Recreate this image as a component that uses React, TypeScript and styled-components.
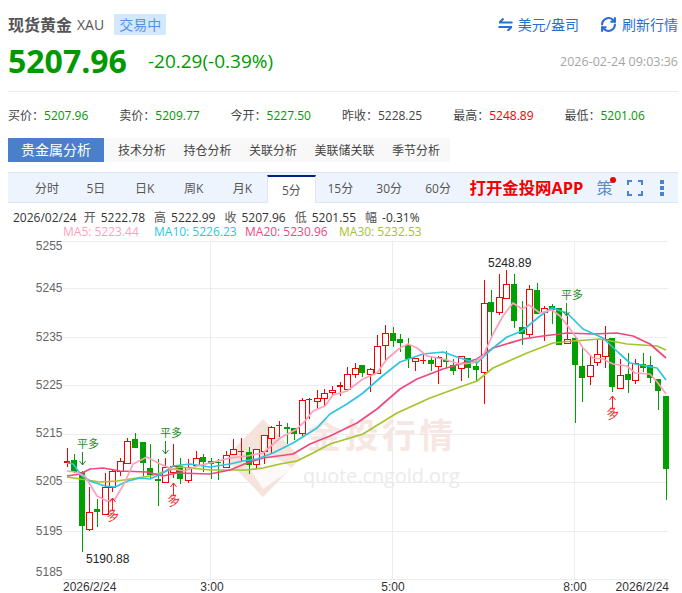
import React from "react";
import styled, { createGlobalStyle } from "styled-components";

const Global = createGlobalStyle`
  html, body { margin: 0; padding: 0; background: #fff; }
  body { font-family: "Open Sans", "Noto Sans CJK SC", sans-serif; font-size: 12px; color: #333; }
`;

const Page = styled.div`
  width: 682px;
  height: 593px;
  overflow: hidden;
  background: #fff;
`;
const Top = styled.div`
  padding: 0 4px 0 8px;
`;
const TitleRow = styled.div`
  display: flex;
  align-items: center;
  height: 24px;
  padding-top: 12px;
`;
const Title = styled.span`
  font-size: 16px;
  font-weight: 700;
  color: #555;
`;
const Code = styled.span`
  font-size: 14px;
  color: #555;
  margin-left: 5px;
`;
const Badge = styled.span`
  margin-left: 10px;
  width: 52px;
  height: 21px;
  line-height: 21px;
  text-align: center;
  font-size: 14px;
  color: #4f94e8;
  background: #d4e8fd;
`;
const Links = styled.div`
  margin-left: auto;
  display: flex;
  gap: 21px;
`;
const LinkItem = styled.a`
  display: flex;
  align-items: center;
  gap: 5px;
  font-size: 14px;
  color: #2a6fd0;
  white-space: nowrap;
`;
const PriceRow = styled.div`
  display: flex;
  align-items: center;
  height: 50px;
  padding-bottom: 5px;
  border-bottom: 1px solid #ececec;
`;
const Price = styled.span`
  font-size: 32px;
  font-weight: 700;
  color: #009a00;
  line-height: 50px;
`;
const Change = styled.span`
  font-size: 19px;
  color: #009a00;
  margin-left: 21px;
  margin-bottom: 1px;
`;
const Stamp = styled.span`
  margin-left: auto;
  font-size: 12.5px;
  color: #a5a5a5;
`;
const Stats = styled.div`
  display: grid;
  grid-template-columns: repeat(6, 111.3px);
  padding: 16px 0 14px;
  line-height: 16px;
`;
const Stat = styled.div`
  font-size: 12px;
  color: #444;
  white-space: nowrap;
`;
const StatValue = styled.span<{ $c: string }>`
  color: ${(p) => p.$c};
`;
const Tabs = styled.div`
  display: flex;
  align-items: center;
  width: 442px;
  height: 24px;
  background: #f8f8f8;
`;
const ActiveTab = styled.div`
  flex: none;
  width: 96px;
  height: 24px;
  line-height: 24px;
  text-align: center;
  font-size: 14px;
  color: #fff;
  background: #4a7fcb;
  margin-right: 14px;
`;
const Tab = styled.div`
  flex: none;
  font-size: 12px;
  color: #444;
  margin-right: 17.5px;
  white-space: nowrap;
`;
const Periods = styled.div`
  display: flex;
  align-items: center;
  height: 29px;
  margin-top: 10px;
  padding-left: 14.5px;
  background: #eef4fd;
  border-top: 1px solid #dfe6f3;
  border-bottom: 1px solid #dfe6f3;
  position: relative;
`;
const Period = styled.div<{ $active?: boolean }>`
  width: 48.9px;
  text-align: center;
  font-size: 12px;
  color: #555;
  box-sizing: border-box;
  ${(p) =>
    p.$active
      ? `
    height: 28px;
    align-self: flex-end;
    margin-bottom: -1px;
    line-height: 27px;
    padding-top: 0;
    background: #fff;
    border-top: 2px solid #00228a;
    border-left: 1px solid #dfe6f3;
    border-right: 1px solid #dfe6f3;
  `
      : ""}
`;
const AppLink = styled.div`
  margin-left: 7px;
  font-size: 16.4px;
  font-weight: 700;
  color: #f00000;
  white-space: nowrap;
  margin-top: -2px;
`;
const Tools = styled.div`
  margin-left: 13px;
  display: flex;
  align-items: center;
`;
const Ce = styled.span`
  position: relative;
  font-size: 16px;
  color: #5b8ecb;
  width: 16px;
  line-height: 20px;
  margin-right: 15px;
`;
const Dot = styled.i`
  position: absolute;
  right: -4px;
  top: -1px;
  width: 6px;
  height: 6px;
  border-radius: 50%;
  background: #f00000;
`;
const Info = styled.div`
  display: flex;
  padding: 7px 0 0 5px;
  height: 15px;
  line-height: 16px;
  font-size: 12px;
  color: #333;
  white-space: nowrap;
`;
const InfoItem = styled.span`
  margin-right: 9px;
`;
const InfoDate = styled.span`
  margin-right: 7px;
`;
const InfoKey = styled.span`
  color: #555;
  margin-right: 5px;
`;
const MaRow = styled.div`
  display: flex;
  height: 14px;
  line-height: 14px;
  padding-left: 63px;
  font-size: 12px;
  white-space: nowrap;
`;
const Ma = styled.span<{ $c: string; $w: number }>`
  color: ${(p) => p.$c};
  width: ${(p) => p.$w}px;
`;
const Chart = styled.svg`
  display: block;
  width: 682px;
  height: 355px;
`;

const GREEN = "#00a000";
const RED = "#f60000";
const C_MA5 = "#ff9fbd";
const C_MA10 = "#2ec4e2";
const C_MA20 = "#f0487e";
const C_MA30 = "#a3c42a";

type Raw = [number, number, number, number, string];
// bodyTop, bodyBottom, wickTop, wickBottom, kind (g green / r hollow red / f flat red)
const z5: Raw[] = [
  [180, 186, 141, 197, "f"], [178, 212, 160, 215, "g"], [212, 374, 210, 452, "g"], [334, 383, 258, 390, "r"],
  [324, 332, 294, 378, "g"], [259, 338, 215, 338, "r"], [210, 258, 207, 273, "r"], [181, 211, 170, 226, "r"],
  [121, 187, 112, 187, "r"], [115, 140, 97, 140, "g"], [124, 185, 124, 225, "g"], [202, 223, 129, 230, "g"],
  [235, 240, 175, 314, "g"], [199, 242, 170, 242, "r"], [196, 214, 129, 230, "r"], [195, 233, 172, 248, "g"],
  [197, 238, 175, 247, "r"], [172, 192, 150, 198, "r"], [168, 183, 158, 212, "g"], [181, 188, 170, 233, "g"],
  [183, 186, 173, 237, "g"], [163, 198, 150, 200, "r"],
];
const z6: Raw[] = [
  [385, 398, 355, 402, "r"], [389, 393, 352, 420, "f"], [393, 433, 377, 458, "g"], [385, 430, 385, 445, "r"],
  [343, 390, 343, 430, "r"], [319, 350, 316, 400, "r"], [312, 316, 300, 348, "f"], [318, 323, 305, 368, "g"],
  [322, 338, 322, 357, "g"], [238, 335, 230, 345, "r"], [233, 237, 230, 295, "f"], [232, 240, 208, 265, "r"],
  [217, 230, 205, 255, "r"], [206, 212, 195, 225, "r"], [193, 197, 182, 225, "f"], [160, 205, 138, 210, "r"],
  [140, 158, 127, 170, "r"], [132, 156, 132, 168, "g"], [145, 158, 140, 212, "r"], [76, 155, 42, 155, "r"],
  [37, 73, 13, 120, "r"], [37, 60, 18, 78, "g"], [55, 66, 40, 92, "g"], [72, 113, 52, 140, "g"],
  [110, 119, 110, 150, "r"], [117, 121, 97, 130, "f"], [118, 128, 105, 150, "g"], [108, 136, 105, 188, "r"],
  [116, 122, 90, 140, "g"], [132, 149, 115, 162, "g"],
];
const z7: Raw[] = [
  [315, 352, 315, 390, "r"], [322, 350, 322, 380, "g"], [345, 356, 330, 390, "g"], [157, 364, 87, 458, "r"],
  [153, 182, 118, 260, "g"], [139, 182, 68, 192, "r"], [100, 140, 58, 142, "r"], [99, 210, 70, 230, "g"],
  [228, 248, 150, 282, "g"], [115, 250, 102, 258, "r"], [117, 188, 97, 188, "g"], [172, 182, 165, 270, "r"],
  [165, 178, 160, 220, "g"], [171, 281, 171, 281, "g"], [265, 277, 195, 277, "r"], [262, 341, 262, 515, "g"],
  [345, 380, 290, 452, "g"], [343, 376, 315, 403, "r"], [310, 333, 265, 345, "r"], [263, 316, 226, 350, "r"],
  [262, 407, 262, 423, "g"], [373, 410, 325, 410, "r"], [369, 386, 305, 425, "g"], [337, 388, 325, 400, "r"],
  [340, 350, 306, 362, "g"], [343, 380, 315, 395, "g"], [384, 419, 384, 476, "g"], [435, 653, 435, 746, "g"],
];
const toY = (base: number) => (r: Raw): Raw => [base + r[0] / 3, base + r[1] / 3, base + r[2] / 3, base + r[3] / 3, r[4]];
const candles: Raw[] = [...z5.map(toY(400)), ...z6.map(toY(320)), ...z7.map(toY(250))];

const ma5 = "67,470 75,471 85,475 97,495 107,500 115,498 124,483 133,463 147,456 160,463 172,468 185,470 197,465 210,462 230,457 247,455 263,452 280,437 297,428 305,420 313,410 325,405 333,394 347,390 363,378 377,372 387,358 400,347 408,343 417,347 427,355 443,358 460,363 473,362 483,355 493,333 503,315 513,302 522,308 529,304 540,312 552,309 560,315 573,332 583,347 593,357 603,358 613,363 627,365 635,372 650,373 658,382 666,393";
const ma10 = "67,462 73,463 82,475 90,480 105,485 115,486 128,480 140,477 150,478 163,472 173,465 190,463 210,466 230,463 243,460 257,458 273,452 293,442 317,427 330,413 347,403 363,392 380,377 400,361 423,353 443,351 460,357 477,362 493,347 507,336 522,330 540,315 552,307 567,312 583,328 603,337 620,353 630,362 657,367 666,379";
const ma20 = "67,475 80,473 90,468 103,467 120,470 147,471 163,475 177,472 210,473 230,469 247,462 263,457 293,453 310,443 330,435 357,422 377,408 400,388 417,378 443,368 460,363 477,358 493,347 523,338 543,335 567,332 593,333 617,332 633,335 650,343 666,357";
const ma30 = "67,476 100,481 117,480 150,475 180,466 210,469 230,469 247,469 263,467 280,463 297,460 313,452 330,443 363,433 397,412 430,397 460,386 477,380 493,367 527,352 553,342 573,340 600,338 627,343 657,345 666,349";

const hLines = [240, 287, 336, 384, 433, 481, 530, 578];
const vLines = [210, 392.5, 574.3];
const yLabels: [string, number][] = [["5255", 249], ["5245", 291], ["5235", 340], ["5225", 388], ["5215", 436], ["5205", 484], ["5195", 534], ["5185", 575]];

const PingDuo = ({ x, y, tx }: { x: number; y: number; tx: number }) => (
  <g>
    <text x={tx} y={y} fontSize="11" fill="#1f8a1f" textAnchor="middle" fontFamily="'Noto Sans CJK SC', sans-serif">平多</text>
    <path d={`M${x} ${y + 4}V${y + 17}M${x - 3} ${y + 13}L${x} ${y + 17}L${x + 3} ${y + 13}`} stroke="#1f8a1f" strokeWidth="1" fill="none" />
  </g>
);
const Duo = ({ x, y }: { x: number; y: number }) => (
  <g>
    <path d={`M${x} ${y + 13}V${y}M${x - 3} ${y + 4}L${x} ${y}L${x + 3} ${y + 4}`} stroke="#f62020" strokeWidth="1" fill="none" />
    <text x={x} y={y + 22} fontSize="13" fill="#f62020" textAnchor="middle" transform={`rotate(-14 ${x} ${y + 17})`} fontFamily="'Noto Sans CJK SC', sans-serif">多</text>
  </g>
);

const ChartDrawing = () => (
  <Chart viewBox="0 238 682 355">
    {hLines.map((y) => (
      <line key={y} x1="63" x2="668" y1={y + 0.5} y2={y + 0.5} stroke="#ededed" strokeWidth="1" />
    ))}
    {vLines.map((x) => (
      <line key={x} x1={Math.floor(x) + 0.5} x2={Math.floor(x) + 0.5} y1="240" y2="578" stroke="#ededed" strokeWidth="1" />
    ))}
    <g opacity="0.9">
      <path d="M263 418L301 457L263 496L225 457Z" fill="#f6e0d9" />
      <path d="M246 462C262 452 282 456 292 468L263 488Z" fill="#fff" opacity="0.8" />
      <text x="307" y="447" fontSize="34" fontWeight="700" fill="#f6e5df" letterSpacing="3.4" fontFamily="'Noto Sans CJK SC', sans-serif">金投行情</text>
      <text x="303" y="482" fontSize="19.8" fill="#e9e9e9" fontFamily="'Open Sans', sans-serif">quote.cngold.org</text>
    </g>
    {candles.map((c, i) => {
      const x = Math.round(66.7 + 7.58 * i) + 0.5;
      const col = c[4] === "g" ? GREEN : RED;
      const top = Math.round(c[0]);
      const bottom = Math.max(Math.round(c[1]), top + 1);
      return (
        <g key={i}>
          <line x1={x} x2={x} y1={Math.round(c[2])} y2={Math.round(c[3])} stroke={col} strokeWidth="1" />
          {c[4] === "r" ? (
            <rect x={x - 3} y={top + 0.5} width="6" height={bottom - top} fill="#fff" stroke={col} strokeWidth="1" />
          ) : (
            <rect x={x - 3.5} y={top} width="6" height={bottom - top} fill={col} />
          )}
        </g>
      );
    })}
    <polyline points={ma30} fill="none" stroke={C_MA30} strokeWidth="1.7" strokeLinejoin="round" />
    <polyline points={ma20} fill="none" stroke={C_MA20} strokeWidth="1.7" strokeLinejoin="round" />
    <polyline points={ma10} fill="none" stroke={C_MA10} strokeWidth="1.7" strokeLinejoin="round" />
    <polyline points={ma5} fill="none" stroke={C_MA5} strokeWidth="1.7" strokeLinejoin="round" />
    <PingDuo x={82.5} y={447} tx={88} />
    <PingDuo x={165.5} y={436} tx={171} />
    <PingDuo x={566.5} y={298} tx={572} />
    <Duo x={112.5} y={497} />
    <Duo x={173.5} y={482} />
    <Duo x={612.5} y={395} />
    <g fontSize="12" fontFamily="'Liberation Sans', sans-serif">
      <text x="488" y="266" fill="#222">5248.89</text>
      <text x="86" y="562" fill="#222">5190.88</text>
      {yLabels.map(([t, y]) => (
        <text key={t} x="62.5" y={y} fill="#666" textAnchor="end">{t}</text>
      ))}
      <text x="63" y="590" fill="#333">2026/2/24</text>
      <text x="212" y="590" fill="#333" textAnchor="middle">3:00</text>
      <text x="393" y="590" fill="#333" textAnchor="middle">5:00</text>
      <text x="575" y="590" fill="#333" textAnchor="middle">8:00</text>
      <text x="669" y="590" fill="#333" textAnchor="end">2026/2/24</text>
    </g>
  </Chart>
);

const SwapIcon = () => (
  <svg width="15" height="14" viewBox="0 0 15 14" fill="none" stroke="#2a6fd0" strokeWidth="2">
    <path d="M1 5.5H14.5M1.5 5.5L5.5 1.5" />
    <path d="M0.5 10H14M13.5 10L9.5 14" />
  </svg>
);
const RefreshIcon = () => (
  <svg width="17" height="17" viewBox="0 0 24 24" fill="none" stroke="#2a6fd0" strokeWidth="3" strokeLinecap="round" strokeLinejoin="round">
    <path d="M3 12a9 9 0 0 1 15-6.7L21 8" />
    <path d="M21 3v5h-5" />
    <path d="M21 12a9 9 0 0 1-15 6.7L3 16" />
    <path d="M8 16H3v5" />
  </svg>
);
const FullIcon = () => (
  <svg width="16" height="16" viewBox="0 0 16 16" fill="none" stroke="#4a84d0" strokeWidth="2">
    <path d="M1 5V1H5M11 1H15V5M15 11V15H11M5 15H1V11" />
  </svg>
);
const MoreDots = styled.svg`
  margin-left: 17px;
`;
const MoreIcon = () => (
  <MoreDots width="4" height="16" viewBox="0 0 4 16" fill="#4a84d0">
    <rect x="0" y="0" width="4" height="4" />
    <rect x="0" y="6" width="4" height="4" />
    <rect x="0" y="12" width="4" height="4" />
  </MoreDots>
);

const stats: [string, string, string][] = [
  ["买价：", "5207.96", "#009a00"],
  ["卖价：", "5209.77", "#009a00"],
  ["今开：", "5227.50", "#009a00"],
  ["昨收：", "5228.25", "#444"],
  ["最高：", "5248.89", "#f00000"],
  ["最低：", "5201.06", "#009a00"],
];
const info: [string, string][] = [
  ["开", "5222.78"],
  ["高", "5222.99"],
  ["收", "5207.96"],
  ["低", "5201.55"],
  ["幅", "-0.31%"],
];

export default function App() {
  return (
    <Page>
      <Global />
      <Top>
        <TitleRow>
          <Title>现货黄金</Title>
          <Code>XAU</Code>
          <Badge>交易中</Badge>
          <Links>
            <LinkItem><SwapIcon />美元/盎司</LinkItem>
            <LinkItem><RefreshIcon />刷新行情</LinkItem>
          </Links>
        </TitleRow>
        <PriceRow>
          <Price>5207.96</Price>
          <Change>-20.29(-0.39%)</Change>
          <Stamp>2026-02-24 09:03:36</Stamp>
        </PriceRow>
        <Stats>
          {stats.map(([k, v, c]) => (
            <Stat key={k}>{k}<StatValue $c={c}>{v}</StatValue></Stat>
          ))}
        </Stats>
        <Tabs>
          <ActiveTab>贵金属分析</ActiveTab>
          {["技术分析", "持仓分析", "关联分析", "美联储关联", "季节分析"].map((t) => (
            <Tab key={t}>{t}</Tab>
          ))}
        </Tabs>
        <Periods>
          {["分时", "5日", "日K", "周K", "月K"].map((t) => <Period key={t}>{t}</Period>)}
          <Period $active>5分</Period>
          {["15分", "30分", "60分"].map((t) => <Period key={t}>{t}</Period>)}
          <AppLink>打开金投网APP</AppLink>
          <Tools>
            <Ce>策<Dot /></Ce>
            <FullIcon />
            <MoreIcon />
          </Tools>
        </Periods>
        <Info>
          <InfoDate>2026/02/24</InfoDate>
          {info.map(([k, v]) => (
            <InfoItem key={k}><InfoKey>{k}</InfoKey>{v}</InfoItem>
          ))}
        </Info>
      </Top>
      <MaRow>
        <Ma $c={C_MA5} $w={91}>MA5: 5223.44</Ma>
        <Ma $c={C_MA10} $w={91}>MA10: 5226.23</Ma>
        <Ma $c={C_MA20} $w={94}>MA20: 5230.96</Ma>
        <Ma $c={C_MA30} $w={90}>MA30: 5232.53</Ma>
      </MaRow>
      <ChartDrawing />
    </Page>
  );
}
